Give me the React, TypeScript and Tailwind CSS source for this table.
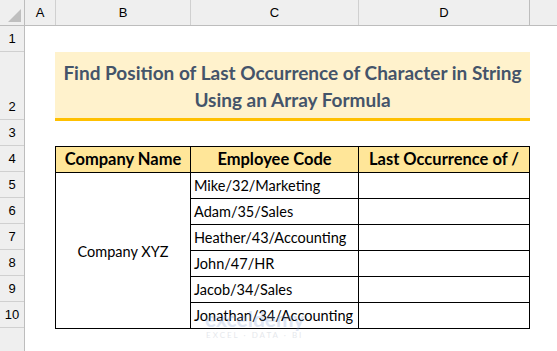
const rowHeights = [26, 26, 68, 26, 26, 26, 26, 26, 26, 26, 26];

const employees = [
  'Mike/32/Marketing',
  'Adam/35/Sales',
  'Heather/43/Accounting',
  'John/47/HR',
  'Jacob/34/Sales',
  'Jonathan/34/Accounting',
];

const App = () => {
  return (
    <div className="flex h-[351px] w-[557px] flex-col overflow-hidden bg-white font-['Liberation_Sans',sans-serif]">
      {/* column headers */}
      <div className="flex h-[26px] shrink-0 border-b border-[#bdbdbd] bg-[#efefef] text-[13px] text-black">
        <div className="relative w-[25px] border-r border-[#bdbdbd]">
          <div className="absolute bottom-[3px] right-[3px] h-0 w-0 border-b-[13px] border-l-[13px] border-b-[#bfbfbf] border-l-transparent" />
        </div>
        <div className="flex w-[31px] items-center justify-center border-r border-[#d0d0d0]">A</div>
        <div className="flex w-[135px] items-center justify-center border-r border-[#d0d0d0]">B</div>
        <div className="flex w-[168px] items-center justify-center border-r border-[#d0d0d0]">C</div>
        <div className="flex w-[171px] items-center justify-center border-r border-[#bdbdbd]">D</div>
        <div className="flex-1" />
      </div>

      <div className="flex flex-1">
        {/* row headers */}
        <div className="flex w-[25px] shrink-0 flex-col border-r border-[#bdbdbd] bg-[#efefef] text-[13px] text-black">
          {rowHeights.slice(1).map((h, i) => (
            <div
              key={i}
              style={{ height: h }}
              className="flex items-end justify-center border-b border-[#d0d0d0] pb-[3px]"
            >
              {i + 1}
            </div>
          ))}
          <div className="flex-1" />
        </div>

        {/* sheet */}
        <div className="relative flex flex-1 flex-col pl-[30px] pt-[26px]">
          <div className="flex h-[69px] w-[475px] flex-col items-center justify-center border-b-[3px] border-[#ffc000] bg-[#fff2cc] pt-[2px] font-['Lato',sans-serif] text-[19px] font-bold leading-[27px] text-[#44546a]">
            <span>Find Position of Last Occurrence of Character in String</span>
            <span>Using an Array Formula</span>
          </div>

          <div className="mt-[25px] grid w-[475px] grid-cols-[135px_168px_171px] border-l border-t border-black font-['Lato',sans-serif] text-[14.5px] text-black">
            <div className="flex h-[26px] items-center justify-center border-b border-r border-black bg-[#ffe699] text-[16.5px] font-bold">
              Company Name
            </div>
            <div className="flex h-[26px] items-center justify-center border-b border-r border-black bg-[#ffe699] text-[16.5px] font-bold">
              Employee Code
            </div>
            <div className="flex h-[26px] items-center justify-center border-b border-r border-black bg-[#ffe699] text-[16.5px] font-bold">
              Last Occurrence of /
            </div>
            <div className="row-span-6 flex items-center justify-center border-b border-r border-black pt-[2px]">
              Company XYZ
            </div>
            {employees.map((e) => (
              <div key={e} className="contents">
                <div className="flex h-[26px] items-end border-b border-r border-black pb-[1px] pl-[3px]">{e}</div>
                <div className="h-[26px] border-b border-r border-black" />
              </div>
            ))}
          </div>

          {/* watermark */}
          <div className="pointer-events-none absolute left-[180px] top-[283px] flex flex-col items-center opacity-25">
            <span className="font-['Lato',sans-serif] text-[21px] font-bold leading-[20px] text-[#7f9ccf]">exceldemy</span>
            <span className="font-['Lato',sans-serif] text-[8px] tracking-[2px] text-[#9aa4b4]">EXCEL · DATA · BI</span>
          </div>
        </div>
      </div>
    </div>
  );
};

export default App;
